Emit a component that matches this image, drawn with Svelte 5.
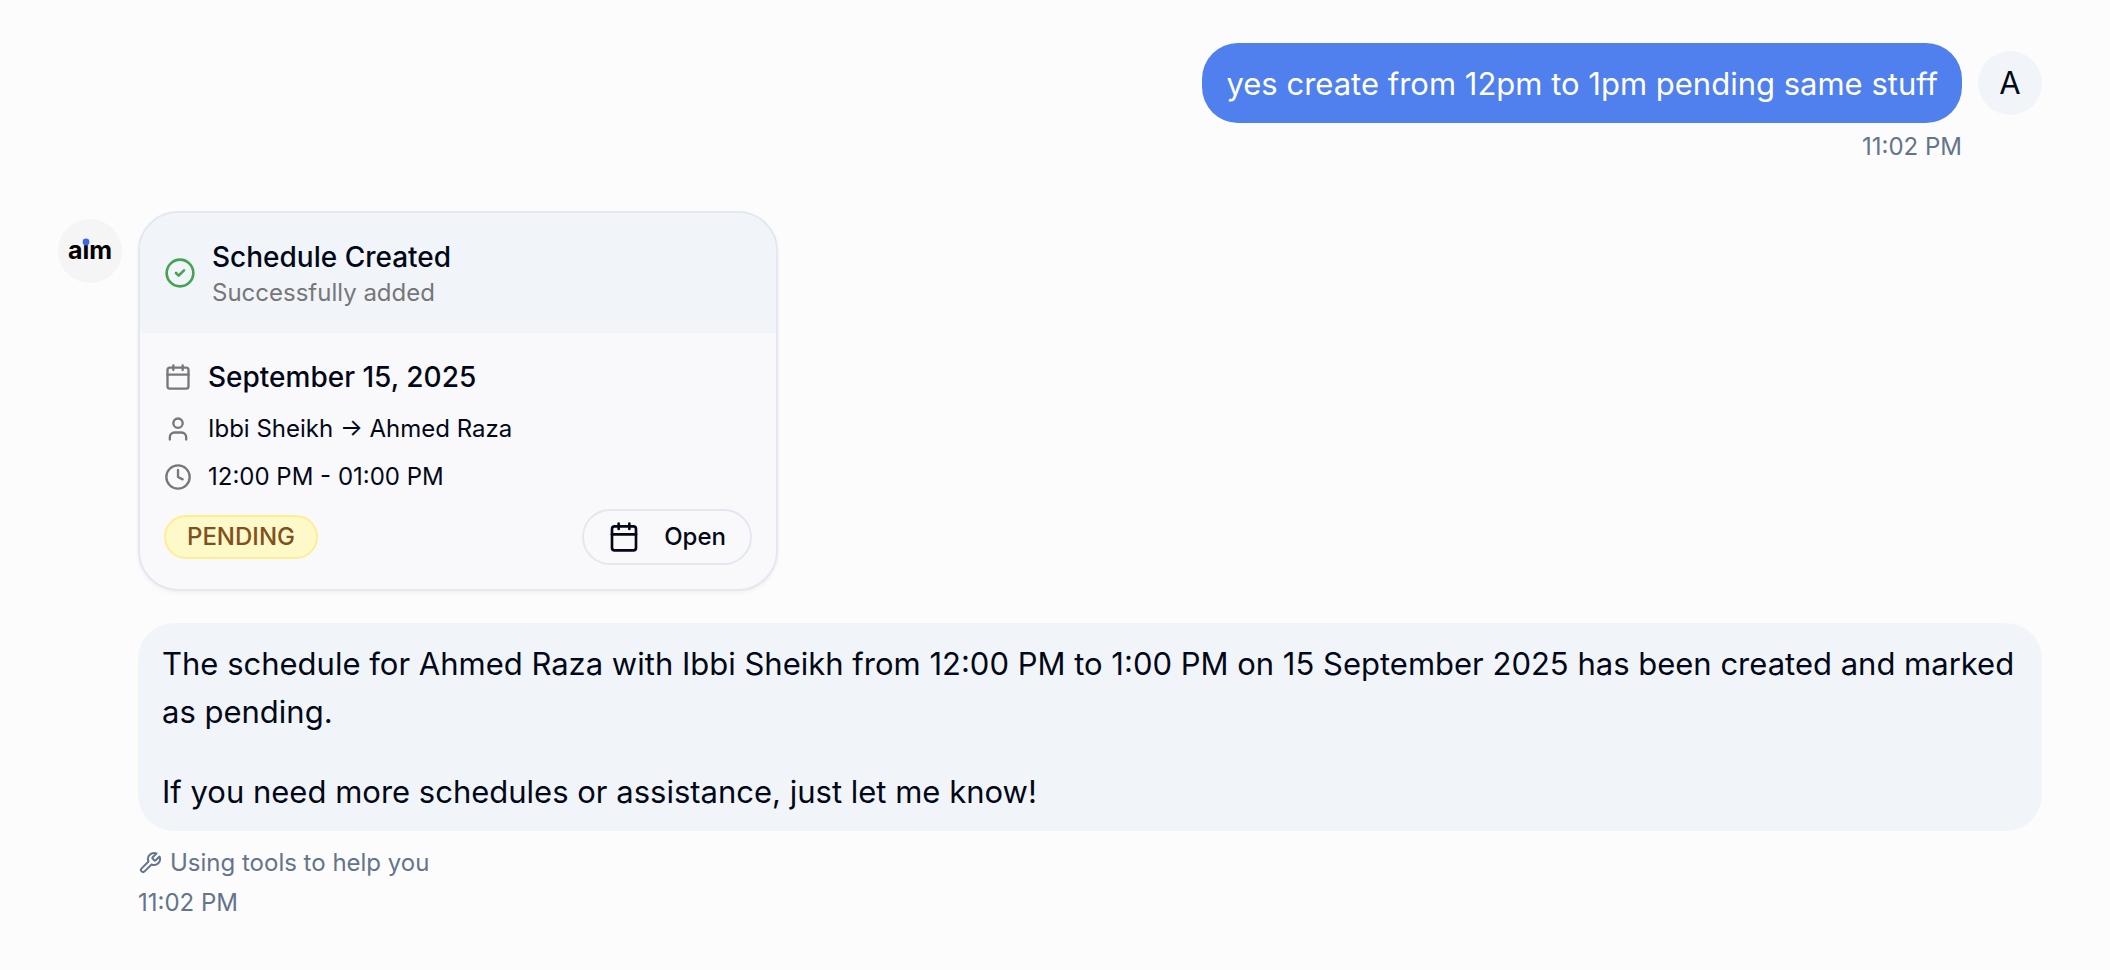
<script>
	const request = {
		text: 'yes create from 12pm to 1pm pending same stuff',
		initial: 'A',
		time: '11:02 PM'
	};

	const schedule = {
		date: 'September 15, 2025',
		from: 'Ibbi Sheikh',
		to: 'Ahmed Raza',
		hours: '12:00 PM - 01:00 PM',
		status: 'PENDING'
	};

	const reply = {
		paragraphs: [
			'The schedule for Ahmed Raza with Ibbi Sheikh from 12:00 PM to 1:00 PM on 15 September 2025 has been created and marked as pending.',
			'If you need more schedules or assistance, just let me know!'
		],
		time: '11:02 PM'
	};
</script>

{#snippet calendar()}
	<svg class="icon" viewBox="0 0 24 24" aria-hidden="true">
		<path d="M8 2v4M16 2v4" />
		<rect width="18" height="18" x="3" y="4" rx="2" />
		<path d="M3 10h18" />
	</svg>
{/snippet}

<main class="chat">
	<article class="message user">
		<div class="content">
			<p class="bubble">{request.text}</p>
			<time>{request.time}</time>
		</div>
		<div class="avatar">{request.initial}</div>
	</article>

	<article class="message">
		<div class="avatar logo">
			<svg viewBox="0 0 64 64" role="img" aria-label="aim">
				<text x="32" y="40" text-anchor="middle">aim</text>
				<circle cx="28" cy="23" r="3.4" />
			</svg>
		</div>
		<div class="content">
			<section class="card">
				<header>
					<svg class="icon success" viewBox="0 0 24 24" aria-hidden="true">
						<circle cx="12" cy="12" r="10" />
						<path d="m9 12 2 2 4-4" />
					</svg>
					<div>
						<h2>Schedule Created</h2>
						<p class="subtitle">Successfully added</p>
					</div>
				</header>
				<div class="details">
					<div class="row date">
						{@render calendar()}
						<span>{schedule.date}</span>
					</div>
					<div class="row">
						<svg class="icon" viewBox="0 0 24 24" aria-hidden="true">
							<path d="M19 21v-2a4 4 0 0 0-4-4H9a4 4 0 0 0-4 4v2" />
							<circle cx="12" cy="7" r="4" />
						</svg>
						<span>{schedule.from} → {schedule.to}</span>
					</div>
					<div class="row">
						<svg class="icon" viewBox="0 0 24 24" aria-hidden="true">
							<circle cx="12" cy="12" r="10" />
							<path d="M12 6v6l4 2" />
						</svg>
						<span>{schedule.hours}</span>
					</div>
					<div class="actions">
						<span class="badge">{schedule.status}</span>
						<button type="button">
							{@render calendar()}
							Open
						</button>
					</div>
				</div>
			</section>

			<div class="bubble reply">
				{#each reply.paragraphs as paragraph}
					<p>{paragraph}</p>
				{/each}
			</div>
			<div class="tools">
				<svg class="icon" viewBox="0 0 24 24" aria-hidden="true">
					<path
						d="M14.7 6.3a1 1 0 0 0 0 1.4l1.6 1.6a1 1 0 0 0 1.4 0l3.77-3.77a6 6 0 0 1-7.94 7.94l-6.91 6.91a2.12 2.12 0 0 1-3-3l6.91-6.91a6 6 0 0 1 7.94-7.94l-3.76 3.76z"
					/>
				</svg>
				<span>Using tools to help you</span>
			</div>
			<time>{reply.time}</time>
		</div>
	</article>
</main>

<style>
	:global(body) {
		margin: 0;
		background: #fcfcfc;
	}

	.chat {
		display: flex;
		flex-direction: column;
		gap: 48px;
		padding: 43px 68px 48px 58px;
		color: #020817;
		font-family: Inter, 'Liberation Sans', sans-serif;
		font-size: 31px;
		line-height: 48px;
	}

	p,
	h2 {
		margin: 0;
	}

	.message {
		display: flex;
		align-items: flex-start;
		gap: 16px;
	}

	.user {
		justify-content: flex-end;
	}

	.content {
		display: flex;
		flex-direction: column;
		min-width: 0;
	}

	.message:not(.user) .content {
		flex: 1;
	}

	.user .content {
		align-items: flex-end;
	}

	.bubble {
		padding: 17px 24px 15px;
		border-radius: 36px;
		background: #4f80ee;
		color: #fff;
	}

	.reply {
		display: flex;
		flex-direction: column;
		gap: 32px;
		margin-top: 32px;
		background: #f1f5fa;
		color: #020817;
	}

	time {
		margin-top: 8px;
		color: #64748b;
		font-size: 24px;
		line-height: 32px;
	}

	.avatar {
		display: flex;
		align-items: center;
		justify-content: center;
		flex: none;
		width: 64px;
		height: 64px;
		margin-top: 8px;
		border-radius: 50%;
		background: #f1f5fa;
	}

	.logo {
		background: #f5f5f5;
	}

	.logo svg {
		width: 64px;
		height: 64px;
	}

	.logo text {
		font-size: 25px;
		font-weight: 700;
	}

	.logo circle {
		fill: #3b66e8;
	}

	.icon {
		flex: none;
		width: 28px;
		height: 28px;
		fill: none;
		stroke: currentColor;
		stroke-width: 2;
		stroke-linecap: round;
		stroke-linejoin: round;
	}

	.card {
		box-sizing: border-box;
		width: 100%;
		max-width: 640px;
		overflow: hidden;
		border: 2px solid #e2e8f0;
		border-radius: 40px;
		background: #f9f9fc;
		box-shadow: 0 2px 4px rgba(0, 0, 0, 0.05);
	}

	header {
		display: flex;
		align-items: center;
		gap: 16px;
		padding: 24px;
		background: #f1f5fa;
	}

	.success {
		width: 32px;
		height: 32px;
		color: #47a350;
	}

	h2,
	.date {
		font-size: 28px;
		font-weight: 500;
		line-height: 40px;
	}

	.subtitle {
		color: #777;
		font-size: 24px;
		line-height: 32px;
	}

	.details {
		display: flex;
		flex-direction: column;
		gap: 16px;
		padding: 24px;
		font-size: 24px;
		line-height: 32px;
	}

	.row {
		display: flex;
		align-items: center;
		gap: 16px;
	}

	.row .icon {
		color: #777;
	}

	.actions {
		display: flex;
		align-items: center;
		justify-content: space-between;
	}

	.badge {
		padding: 4px 21px;
		border: 2px solid #fdee94;
		border-radius: 22px;
		background: #fef9c8;
		color: #80501f;
		font-weight: 500;
	}

	button {
		display: flex;
		align-items: center;
		gap: 24px;
		padding: 10px 24px;
		border: 2px solid #e2e8f0;
		border-radius: 28px;
		background: transparent;
		color: inherit;
		font: inherit;
		font-weight: 500;
		cursor: pointer;
	}

	button .icon {
		width: 32px;
		height: 32px;
	}

	.tools {
		display: flex;
		align-items: center;
		gap: 8px;
		margin-top: 16px;
		color: #64748b;
		font-size: 24px;
		line-height: 32px;
	}

	.tools .icon {
		width: 24px;
		height: 24px;
	}
</style>
